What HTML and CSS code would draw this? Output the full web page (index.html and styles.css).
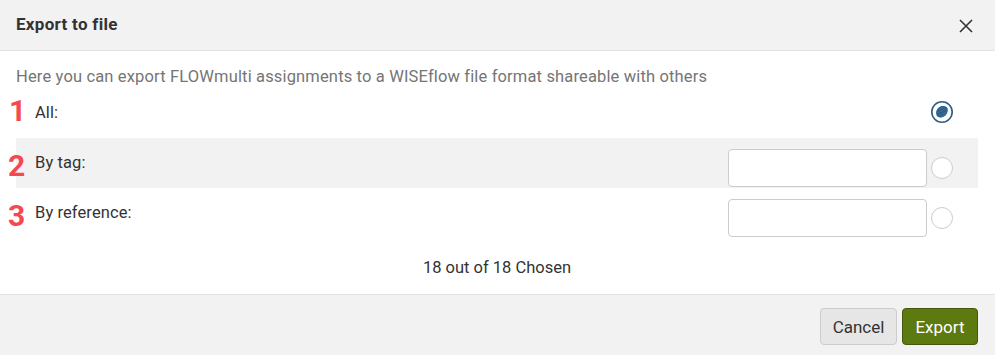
FILE: index.html
```html
<!DOCTYPE html>
<html>
<head>
<meta charset="utf-8">
<link rel="stylesheet" href="styles.css">
</head>
<body>
<div class="modal">
  <div class="header">
    <h1 class="title">Export to file</h1>
    <svg class="close" width="14" height="14" viewBox="0 0 14 14"><path d="M1 1L13 13M13 1L1 13" stroke="#333" stroke-width="1.6" fill="none"/></svg>
  </div>
  <div class="body">
    <p class="desc">Here you can export FLOWmulti assignments to a WISEflow file format shareable with others</p>
    <div class="row">
      <span class="num first">1</span>
      <span class="label">All:</span>
      <svg class="radio-on" width="24" height="24" viewBox="0 0 24 24">
        <circle cx="12" cy="12" r="10.2" fill="#fff" stroke="#2b5d87" stroke-width="1.6"/>
        <path d="M6.2 13.5C5.8 11 7.5 7.5 10.5 6.5C12.5 5.8 15.8 5.9 17.2 7.8C18.5 9.8 17.8 13.2 15.5 15.5C13.5 17.5 9.8 18 7.8 16.8C6.8 16.2 6.3 14.8 6.2 13.5Z" fill="#2b5d87"/>
        <path d="M7.5 10L15.5 6.8M7 13L17.5 8.5M8 16L17 11.5M10.5 17.5L16 14" stroke="#3f74a3" stroke-width="0.9" fill="none"/>
      </svg>
    </div>
    <div class="row alt">
      <span class="num">2</span>
      <span class="label">By tag:</span>
      <input class="field" type="text">
      <span class="radio"></span>
    </div>
    <div class="row">
      <span class="num">3</span>
      <span class="label">By reference:</span>
      <input class="field" type="text">
      <span class="radio"></span>
    </div>
    <p class="count">18 out of 18 Chosen</p>
  </div>
  <div class="footer">
    <button class="btn cancel">Cancel</button>
    <button class="btn export">Export</button>
  </div>
</div>
</body>
</html>
```
FILE: styles.css
```css
html, body {
  margin: 0;
  padding: 0;
  background: #fff;
}
body {
  font-family: Roboto, "Liberation Sans", sans-serif;
  color: #333;
}
.modal {
  width: 995px;
  height: 355px;
  display: flex;
  flex-direction: column;
}
.header {
  height: 50px;
  background: #f2f2f2;
  border-bottom: 1px solid #e3e3e3;
  display: flex;
  align-items: center;
  justify-content: space-between;
  padding: 0 22px 0 16px;
}
.title {
  margin: 0 0 2px 0;
  font-size: 17px;
  letter-spacing: 0.3px;
  font-weight: 700;
  color: #333;
}
.close {
  display: block;
  margin-top: 2px;
}
.body {
  padding: 0 17px 0 16px;
  flex: 1;
}
.desc {
  margin: 0;
  padding-top: 15px;
  line-height: 22px;
  font-size: 16.5px;
  letter-spacing: 0.15px;
  color: #757575;
}
.row {
  position: relative;
  height: 50px;
  display: flex;
  align-items: center;
  padding: 0 25px 0 19px;
}
.row.alt {
  background: #f2f2f2;
}
.num {
  position: absolute;
  left: -8px;
  top: 15px;
  font-size: 30px;
  line-height: 26px;
  font-weight: 700;
  color: #f44a4f;
}
.num.first {
  top: 10px;
  left: -7px;
}
.label {
  flex: 1;
  font-size: 16.5px;
  letter-spacing: 0.1px;
  color: #333;
  margin-top: -2px;
}
.field {
  width: 199px;
  height: 38px;
  box-sizing: border-box;
  border: 1px solid #ccc;
  border-radius: 4px;
  background: #fff;
  margin: 9px 4px 0 0;
  padding: 0 8px;
}
.radio {
  width: 22px;
  height: 22px;
  box-sizing: border-box;
  border: 1px solid #ccc;
  border-radius: 50%;
  background: #fff;
  margin-top: 9px;
}
.radio-on {
  display: block;
  margin-right: -1px;
  margin-top: -2px;
}
.count {
  margin: 0;
  padding-top: 19px;
  line-height: 22px;
  text-align: center;
  font-size: 16.5px;
  color: #333;
}
.footer {
  height: 61px;
  box-sizing: border-box;
  background: #f2f2f2;
  border-top: 1px solid #e3e3e3;
  display: flex;
  justify-content: flex-end;
  align-items: flex-start;
  gap: 5px;
  padding: 13px 17px 0 0;
}
.btn {
  height: 37px;
  box-sizing: border-box;
  border-radius: 4px;
  font-family: Roboto, "Liberation Sans", sans-serif;
  font-size: 17px;
  padding: 0;
}
.cancel {
  width: 77px;
  background: #e6e6e6;
  border: 1px solid #ccc;
  color: #333;
}
.export {
  width: 76px;
  background: #5d7a10;
  border: 1px solid #43580a;
  color: #fff;
}
```
